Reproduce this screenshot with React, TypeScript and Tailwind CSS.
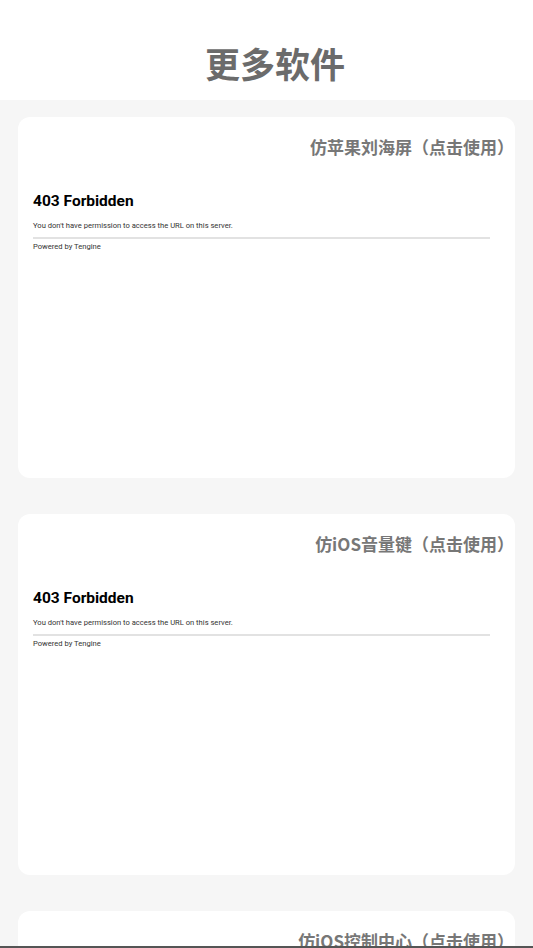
import React from "react";

const cjk = { fontFamily: '"Noto Sans CJK SC", "Noto Sans", sans-serif' };
const rob = { fontFamily: 'Roboto, "Liberation Sans", sans-serif' };

function Card({ title }: { title: string }) {
  return (
    <div className="bg-white rounded-[12px] h-[361px] pl-[15px] pr-[1px] pt-[18px]">
      <div className="text-right text-[17px] leading-[24px] font-bold text-[#777777]" style={cjk}>
        {title}
      </div>
      <div className="pr-[24px] mt-[33px]" style={rob}>
        <div className="text-[15.5px] leading-[18px] font-bold text-black">403 Forbidden</div>
        <div className="text-[7.6px] leading-[8px] text-[#333] mt-[12px]">
          You don't have permission to access the URL on this server.
        </div>
        <div className="h-[2px] bg-[#e2e2e2] mt-[7px]" />
        <div className="text-[7.6px] leading-[8px] text-[#333] mt-[4px]">Powered by Tengine</div>
      </div>
    </div>
  );
}

export default function App() {
  return (
    <div className="min-h-[948px] bg-[#f6f6f6]">
      <div className="h-[100px] bg-white flex items-center justify-center pt-[26px] pl-[17px]">
        <div className="text-[35px] leading-[44px] font-bold text-[#6b6b6b]" style={cjk}>
          更多软件
        </div>
      </div>
      <div className="flex">
        <div className="flex-1 pl-[18px] pr-[18px] pt-[17px] flex flex-col gap-[36px] pb-[20px]">
          <Card title="仿苹果刘海屏（点击使用）" />
          <Card title="仿iOS音量键（点击使用）" />
          <Card title="仿iOS控制中心（点击使用）" />
        </div>
      </div>
      <div className="fixed left-0 right-0 bottom-0 h-[2px] bg-[#555555]" />
    </div>
  );
}
